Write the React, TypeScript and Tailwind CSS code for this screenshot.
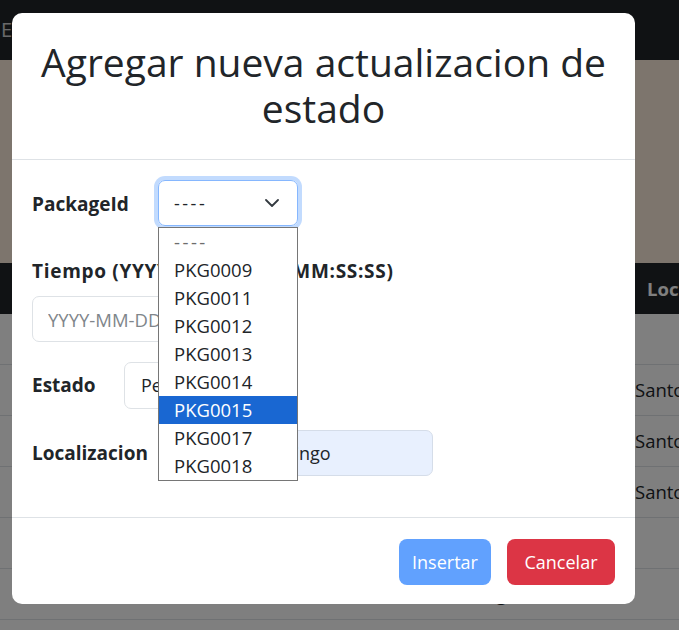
const packageOptions = ['----', 'PKG0009', 'PKG0011', 'PKG0012', 'PKG0013', 'PKG0014', 'PKG0015', 'PKG0017', 'PKG0018'];

const rows = [
  { id: '1', pkg: 'PKG0009', time: '2024-05-01 08:00:00', status: 'Pendiente', loc: '' },
  { id: '2', pkg: 'PKG0011', time: '2024-05-02 09:30:00', status: 'En camino', loc: 'Santo Domingo' },
  { id: '3', pkg: 'PKG0012', time: '2024-05-03 10:15:00', status: 'En camino', loc: 'Santo Domingo' },
  { id: '4', pkg: 'PKG0013', time: '2024-05-04 11:45:00', status: 'Pendiente', loc: 'Santo Domingo' },
  { id: '5', pkg: 'PKG0014', time: '2024-05-05 12:00:00', status: 'Pendiente', loc: '' },
  { id: '6', pkg: 'PKG0015', time: '2024-05-06 13:20:00', status: 'Entregado', loc: '' },
  { id: '7', pkg: 'PKG0017', time: '2024-05-07 14:05:00', status: 'Pendiente', loc: '' },
];

function Chevron() {
  return (
    <svg width="14" height="8" viewBox="0 0 14 8" fill="none" className="shrink-0">
      <path d="M1 1l6 6 6-6" stroke="#343a40" strokeWidth="1.8" strokeLinecap="round" strokeLinejoin="round" />
    </svg>
  );
}

function Background() {
  return (
    <div className="w-full text-[18.5px]">
      <nav className="flex h-[60px] items-center bg-[#212529] pl-[1px]">
        <span className="text-[20px] text-white/80">Envios Track</span>
      </nav>
      <div className="h-[203px] bg-[#faeada]" />
      <div className="grid h-[51px] grid-cols-[60px_150px_230px_185px_1fr] items-center bg-[#212529] font-bold text-white">
        <span className="pl-[16px]">#</span>
        <span className="px-[10px]">PackageId</span>
        <span className="px-[10px]">Tiempo</span>
        <span className="px-[10px]">Estado</span>
        <span className="pl-[22px]">Localizacion</span>
      </div>
      {rows.map((row) => (
        <div
          key={row.id}
          className="grid h-[51px] grid-cols-[60px_150px_230px_185px_1fr] items-center border-b border-[#dee2e6] bg-white text-[#212529]"
        >
          <span className="pl-[16px]">{row.id}</span>
          <span className="px-[10px]">{row.pkg}</span>
          <span className="px-[10px]">{row.time}</span>
          <span className="px-[10px]">{row.status}</span>
          <span className="whitespace-nowrap pl-[10px]">{row.loc}</span>
        </div>
      ))}
    </div>
  );
}

function Modal() {
  return (
    <div className="absolute left-[12px] top-[13px] w-[623px] rounded-[10px] bg-white text-[#212529]">
      <div className="border-b border-[#dee2e6] px-[18px] pb-[28px] pt-[26px]">
        <h1 className="text-center text-[39px] font-medium leading-[46px]">
          Agregar nueva actualizacion de estado
        </h1>
      </div>

      <div className="border-b border-[#dee2e6] px-[20px] pb-[41px] pt-[20px]">
        <div className="flex items-center">
          <label className="w-[126px] pt-[3px] text-[19px] font-bold">PackageId</label>
          <div className="relative z-10">
            <div className="flex h-[46px] w-[140px] items-center justify-between rounded-[7px] border border-[#86b7fe] pl-[15px] pr-[18px] text-[18px] shadow-[0_0_0_4px_rgba(13,110,253,0.25)]">
              <span className="tracking-[2.5px]">----</span>
              <Chevron />
            </div>
            <ul className="absolute left-0 top-[47px] w-[140px] border border-[#767676] bg-white">
              {packageOptions.map((opt, i) => (
                <li
                  key={opt}
                  className={`h-[28px] pl-[15px] text-[18.5px] leading-[28px] ${
                    opt === 'PKG0015'
                      ? 'bg-[#1967d2] text-white'
                      : i === 0
                        ? 'tracking-[2.5px] text-[#6d6d6d]'
                        : 'text-[#212529]'
                  }`}
                >
                  {opt}
                </li>
              ))}
            </ul>
          </div>
        </div>

        <label className="mt-[31px] block text-[19px] font-bold leading-[29px] tracking-[0.7px]">
          Tiempo (YYYY-MM-DD HH:MM:SS:SS)
        </label>
        <input
          readOnly
          placeholder="YYYY-MM-DD HH:MM:SS:SS"
          className="mt-[10px] block h-[46px] w-[250px] rounded-[7px] border border-[#dee2e6] px-[15px] text-[18.5px] outline-none placeholder:text-[#80868b]"
        />

        <div className="mt-[20px] flex items-center">
          <label className="w-[92px] text-[19px] font-bold">Estado</label>
          <div className="flex h-[47px] w-[170px] items-center justify-between rounded-[7px] border border-[#dee2e6] pl-[16px] pr-[18px] text-[18px]">
            <span>Pendiente</span>
            <Chevron />
          </div>
        </div>

        <div className="mt-[21px] flex items-center">
          <label className="w-[154px] text-[19px] font-bold">Localizacion</label>
          <div className="flex h-[46px] w-[247px] items-center rounded-[7px] border border-[#d5dde9] bg-[#e8f0fe] pl-[14px] text-[18px]">
            Santo Domingo
          </div>
        </div>
      </div>

      <div className="flex justify-end gap-[16px] px-[20px] pb-[19px] pt-[21px]">
        <button className="h-[46px] w-[92px] rounded-[8px] bg-[#61a1fe] text-[18px] text-white">Insertar</button>
        <button className="h-[46px] w-[108px] rounded-[8px] bg-[#dc3545] text-[18px] text-white">Cancelar</button>
      </div>
    </div>
  );
}

export default function App() {
  return (
    <div className="relative h-[630px] w-[679px] overflow-hidden font-['Open_Sans',sans-serif] text-[17px]">
      <Background />
      <div className="absolute inset-0 bg-black/50" />
      <Modal />
    </div>
  );
}
